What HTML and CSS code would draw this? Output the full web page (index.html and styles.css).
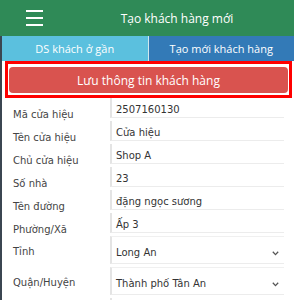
FILE: index.html
```html
<!DOCTYPE html>
<html lang="vi">
<head>
  <meta charset="UTF-8">
  <meta name="viewport" content="width=device-width, initial-scale=1.0">
  <title>Tạo khách hàng mới</title>
  <link rel="stylesheet" href="styles.css">
</head>
<body>
  <div class="topbar">
    <div class="menu-btn">
      <span></span><span></span><span></span>
    </div>
    <div class="title">Tạo khách hàng mới</div>
  </div>
  <div class="page">
    <div class="tabs">
      <div class="tab tab-near">DS khách ở gần</div>
      <div class="tab tab-new">Tạo mới khách hàng</div>
    </div>
    <div class="highlight">
      <div class="btn-save">Lưu thông tin khách hàng</div>
    </div>
    <div class="form">
      <div class="row">
        <div class="label">Mã cửa hiệu</div>
        <div class="field">2507160130</div>
      </div>
      <div class="row">
        <div class="label">Tên cửa hiệu</div>
        <div class="field">Cửa hiệu</div>
      </div>
      <div class="row">
        <div class="label">Chủ cửa hiệu</div>
        <div class="field">Shop A</div>
      </div>
      <div class="row">
        <div class="label">Số nhà</div>
        <div class="field">23</div>
      </div>
      <div class="row">
        <div class="label">Tên đường</div>
        <div class="field">đặng ngọc sương</div>
      </div>
      <div class="row">
        <div class="label">Phường/Xã</div>
        <div class="field">Ấp 3</div>
      </div>
      <div class="row row-select">
        <div class="label">Tỉnh</div>
        <div class="field select">
          <span>Long An</span>
          <svg class="chevron" width="7" height="5" viewBox="0 0 7 5"><path d="M0.8 0.8 L3.5 3.6 L6.2 0.8" fill="none" stroke="#555" stroke-width="1.3"/></svg>
        </div>
      </div>
      <div class="row row-select">
        <div class="label">Quận/Huyện</div>
        <div class="field select">
          <span>Thành phố Tân An</span>
          <svg class="chevron" width="7" height="5" viewBox="0 0 7 5"><path d="M0.8 0.8 L3.5 3.6 L6.2 0.8" fill="none" stroke="#555" stroke-width="1.3"/></svg>
        </div>
      </div>
      <div class="row">
        <div class="label"></div>
        <div class="field"></div>
      </div>
    </div>
  </div>
</body>
</html>
```

FILE: styles.css
```css
html, body {
  margin: 0;
  padding: 0;
  height: 100%;
  overflow: hidden;
}
body {
  background: #3b4651;
  font-family: "Open Sans", "Noto Sans", sans-serif;
}
.topbar {
  height: 36px;
  background: #2f8a57;
  display: flex;
  align-items: center;
}
.menu-btn {
  width: 60px;
  display: flex;
  flex-direction: column;
  align-items: flex-start;
  padding-left: 26px;
  box-sizing: border-box;
  gap: 4.5px;
}
.menu-btn span {
  display: block;
  width: 17px;
  height: 2.5px;
  background: #fff;
}
.title {
  flex: 1;
  text-align: center;
  color: #fff;
  font-size: 12px;
}
.page {
  margin-left: 2px;
  background: #fff;
  height: 264px;
  overflow: hidden;
}
.tabs {
  display: flex;
  height: 25px;
}
.tab {
  flex: 1;
  display: flex;
  align-items: center;
  justify-content: center;
  color: #fff;
  font-size: 11px;
}
.tab-near {
  background: #5bc0de;
  border-right: 1px solid #cfe8ee;
}
.tab-new {
  background: #337ab7;
}
.highlight {
  margin: 0 2px 0 3px;
  border: 3px solid #ff0000;
  padding: 3px 1px 2px;
}
.btn-save {
  height: 26px;
  background: #d9534f;
  border-radius: 4px;
  color: #fff;
  font-size: 12px;
  display: flex;
  align-items: center;
  justify-content: center;
}
.form {
  padding: 0 10px 0 11px;
  font-family: "DejaVu Sans", Verdana, sans-serif;
  font-size: 10px;
}
.row {
  display: flex;
  height: 20px;
  margin-bottom: 3px;
}
.label {
  width: 97px;
  color: #444;
  line-height: 14px;
  padding-top: 10px;
}
.field {
  flex: 1;
  border-left: 2px solid #e4e4e4;
  border-bottom: 1px solid #ececec;
  color: #333;
  line-height: 14px;
  padding: 5px 0 0 4px;
  white-space: nowrap;
}
.row-select {
  height: 28px;
  margin-top: 1px;
  margin-bottom: 3px;
}
.row-select .label {
  padding-top: 9px;
}
.select {
  height: 28px;
  box-sizing: border-box;
  padding: 9px 0 0 4px;
  border-top: 1px solid #f0f0f0;
  display: flex;
  align-items: flex-start;
  justify-content: space-between;
}
.chevron {
  margin: 5px 5px 0 0;
}
```
